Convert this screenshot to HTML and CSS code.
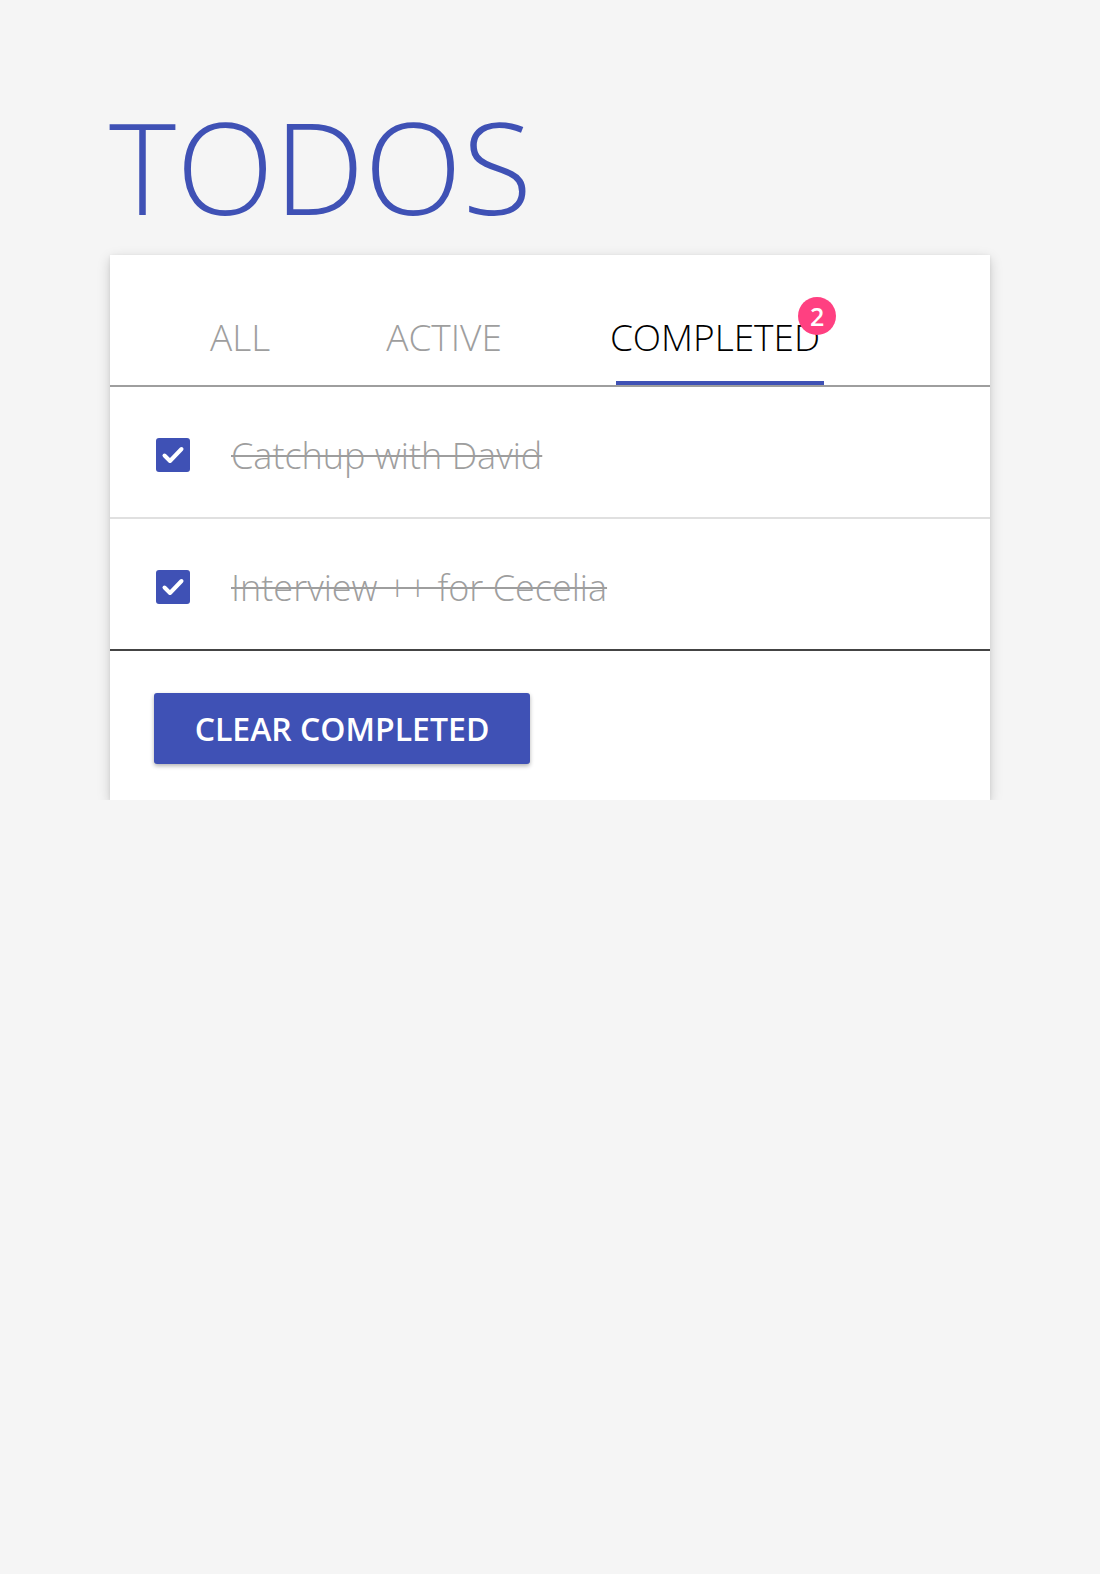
FILE: index.html
```html
<!DOCTYPE html>
<html>
<head>
<meta charset="utf-8">
<link rel="stylesheet" href="styles.css">
</head>
<body>
<div class="page">
  <h1 class="title">TODOS</h1>
  <div class="card">
    <div class="tabs">
      <div class="tab tab-all">ALL</div>
      <div class="tab tab-active">ACTIVE</div>
      <div class="tab tab-completed is-selected">COMPLETED<span class="badge">2</span><span class="indicator"></span></div>
    </div>
    <ul class="list">
      <li class="item">
        <span class="checkbox"><svg width="34" height="34" viewBox="0 0 34 34"><path d="M8.5 17.5 L14 23 L25.5 11" fill="none" stroke="#fff" stroke-width="4" stroke-linecap="round" stroke-linejoin="round"/></svg></span>
        <span class="label">Catchup with David</span>
      </li>
      <li class="item">
        <span class="checkbox"><svg width="34" height="34" viewBox="0 0 34 34"><path d="M8.5 17.5 L14 23 L25.5 11" fill="none" stroke="#fff" stroke-width="4" stroke-linecap="round" stroke-linejoin="round"/></svg></span>
        <span class="label">Interview ++ for Cecelia</span>
      </li>
    </ul>
    <div class="footer">
      <button class="clear-btn">CLEAR COMPLETED</button>
    </div>
  </div>
</div>
</body>
</html>
```
FILE: styles.css
```css
html, body {
  margin: 0;
  padding: 0;
  background: #f5f5f5;
  font-family: "Open Sans", "Liberation Sans", sans-serif;
}
.page {
  width: 880px;
  margin-left: 110px;
  padding-top: 102px;
}
.title {
  margin: 0 0 25px -1px;
  font-size: 128px;
  line-height: 128px;
  font-weight: 300;
  color: #3f51b5;
  letter-spacing: 0;
}
.card {
  background: #fff;
  box-shadow: 0 4px 12px rgba(0,0,0,0.18), 0 1px 3px rgba(0,0,0,0.08);
}
.tabs {
  display: flex;
  align-items: flex-end;
  height: 130px;
  border-bottom: 2px solid #9e9e9e;
  padding-left: 100px;
  box-sizing: content-box;
}
.tab {
  position: relative;
  font-size: 37px;
  font-weight: 300;
  line-height: 37px;
  color: #9e9e9e;
  padding-bottom: 30px;
}
.tab-active { margin-left: 116px; }
.tab-completed { margin-left: 108px; color: #000; }
.badge {
  position: absolute;
  right: -16px;
  top: -21px;
  width: 38px;
  height: 38px;
  border-radius: 50%;
  background: #ff4081;
  color: #fff;
  font-size: 25px;
  font-weight: 600;
  line-height: 38px;
  text-align: center;
}
.indicator {
  position: absolute;
  left: 6px;
  bottom: 0;
  width: 208px;
  height: 4px;
  background: #3f51b5;
}
.list {
  list-style: none;
  margin: 0;
  padding: 0;
  border-bottom: 2px solid #444;
}
.item {
  display: flex;
  align-items: center;
  height: 130px;
  padding-left: 46px;
  padding-top: 6px;
  box-sizing: border-box;
}
.item + .item {
  border-top: 2px solid #e0e0e0;
  height: 132px;
}
.checkbox {
  width: 34px;
  height: 34px;
  border-radius: 3px;
  background: #3f51b5;
  display: flex;
}
.label {
  margin-left: 41px;
  font-size: 36px;
  font-weight: 300;
  color: #9e9e9e;
  text-decoration: line-through;
  text-decoration-thickness: 2px;
}
.footer {
  padding: 42px 0 36px 44px;
}
.clear-btn {
  display: block;
  width: 376px;
  height: 71px;
  border: none;
  border-radius: 3px;
  background: #3f51b5;
  color: #fff;
  font-family: "Open Sans", "Liberation Sans", sans-serif;
  font-size: 32px;
  font-weight: 600;
  padding: 0;
  box-shadow: 0 2px 4px rgba(0,0,0,0.3);
}
```
